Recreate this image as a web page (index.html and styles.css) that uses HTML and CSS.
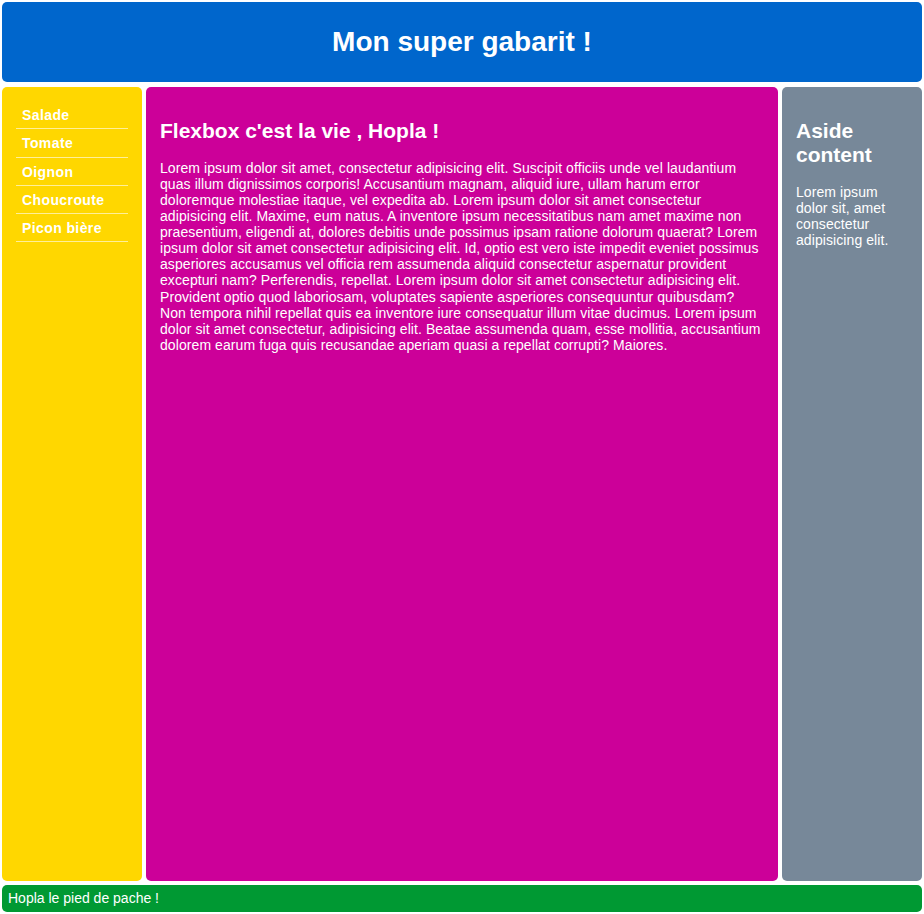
FILE: index.html
```html
<!DOCTYPE html>
<html lang="fr">
<head>
<meta charset="utf-8">
<title>Mon super gabarit</title>
<link rel="stylesheet" href="styles.css">
</head>
<body>
<header class="header"><h1 class="title">Mon super gabarit !</h1></header>
<div class="wrap">
  <nav class="nav">
    <ul class="menu">
      <li class="menu-item">Salade</li>
      <li class="menu-item">Tomate</li>
      <li class="menu-item">Oignon</li>
      <li class="menu-item">Choucroute</li>
      <li class="menu-item">Picon bière</li>
    </ul>
  </nav>
  <main class="main">
    <h2 class="heading">Flexbox c'est la vie , Hopla !</h2>
    <p class="text">Lorem ipsum dolor sit amet, consectetur adipisicing elit. Suscipit officiis unde vel laudantium quas illum dignissimos corporis! Accusantium magnam, aliquid iure, ullam harum error doloremque molestiae itaque, vel expedita ab. Lorem ipsum dolor sit amet consectetur adipisicing elit. Maxime, eum natus. A inventore ipsum necessitatibus nam amet maxime non praesentium, eligendi at, dolores debitis unde possimus ipsam ratione dolorum quaerat? Lorem ipsum dolor sit amet consectetur adipisicing elit. Id, optio est vero iste impedit eveniet possimus asperiores accusamus vel officia rem assumenda aliquid consectetur aspernatur provident excepturi nam? Perferendis, repellat. Lorem ipsum dolor sit amet consectetur adipisicing elit. Provident optio quod laboriosam, voluptates sapiente asperiores consequuntur quibusdam? Non tempora nihil repellat quis ea inventore iure consequatur illum vitae ducimus. Lorem ipsum dolor sit amet consectetur, adipisicing elit. Beatae assumenda quam, esse mollitia, accusantium dolorem earum fuga quis recusandae aperiam quasi a repellat corrupti? Maiores.</p>
  </main>
  <aside class="aside">
    <h2 class="heading">Aside content</h2>
    <p class="text">Lorem ipsum dolor sit, amet consectetur adipisicing elit.</p>
  </aside>
</div>
<footer class="footer">Hopla le pied de pache !</footer>
</body>
</html>
```
FILE: styles.css
```css
* { box-sizing: border-box; }
html, body { height: 100%; }
body {
  margin: 0;
  padding: 2px;
  display: flex;
  flex-direction: column;
  font-family: "Liberation Sans", Arial, sans-serif;
  font-size: 14px;
  color: #fff;
  background: #fff;
}
.header {
  height: 80px;
  flex: none;
  background: #0066cc;
  border-radius: 5px;
  display: flex;
  align-items: center;
  justify-content: center;
}
.title {
  margin: 0;
  font-size: 28px;
  font-weight: bold;
}
.wrap {
  flex: 1;
  display: flex;
  gap: 4px;
  margin: 5px 0 4px;
}
.nav {
  width: 140px;
  flex: none;
  background: #ffd700;
  border-radius: 5px;
  padding: 14px;
}
.menu {
  list-style: none;
  margin: 0;
  padding: 0;
}
.menu-item {
  padding: 7px 6px 5px;
  line-height: 15.25px;
  font-weight: bold;
  letter-spacing: 0.4px;
  border-bottom: 1px solid rgba(255, 255, 255, 0.6);
}
.main {
  flex: 1;
  background: #cc0099;
  border-radius: 5px;
  padding: 14px;
}
.aside {
  width: 140px;
  flex: none;
  background: #778899;
  border-radius: 5px;
  padding: 14px;
}
.heading {
  font-size: 21px;
  font-weight: bold;
  line-height: 24px;
  margin: 18.4px 0 16.4px;
}
.text {
  margin: 14px 0;
  line-height: 16.1px;
  letter-spacing: 0.08px;
}
.footer {
  height: 27px;
  flex: none;
  background: #009933;
  border-radius: 5px;
  padding: 0 6px 2px;
  display: flex;
  align-items: center;
}
```
